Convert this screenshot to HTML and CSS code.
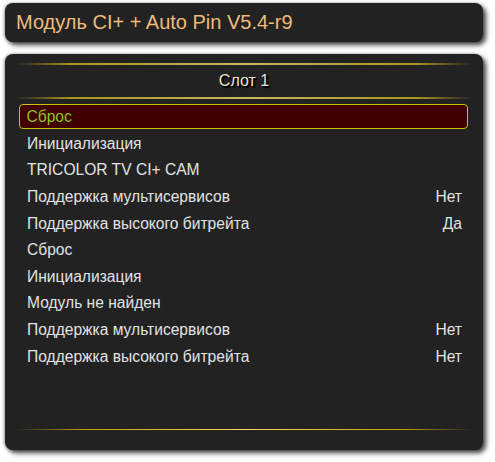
FILE: index.html
```html
<!DOCTYPE html>
<html lang="ru">
<head>
<meta charset="utf-8">
<title>Модуль CI+</title>
<link rel="stylesheet" href="styles.css">
</head>
<body>
<div class="screen">
  <header class="titlebar">Модуль CI+ + Auto Pin V5.4-r9</header>
  <section class="panel">
    <div class="gold-line"></div>
    <div class="slot-title">Слот 1</div>
    <div class="gold-line"></div>
    <ul class="menu">
      <li class="item selected"><span>Сброс</span></li>
      <li class="item"><span>Инициализация</span></li>
      <li class="item"><span>TRICOLOR TV CI+ CAM</span></li>
      <li class="item"><span>Поддержка мультисервисов</span><span class="val">Нет</span></li>
      <li class="item"><span>Поддержка высокого битрейта</span><span class="val">Да</span></li>
      <li class="item"><span>Сброс</span></li>
      <li class="item"><span>Инициализация</span></li>
      <li class="item"><span>Модуль не найден</span></li>
      <li class="item"><span>Поддержка мультисервисов</span><span class="val">Нет</span></li>
      <li class="item"><span>Поддержка высокого битрейта</span><span class="val">Нет</span></li>
    </ul>
    <div class="spacer"></div>
    <div class="gold-line bottom"></div>
  </section>
</div>
</body>
</html>
```

FILE: styles.css
```css
html, body {
  margin: 0;
  padding: 0;
  background: #ffffff;
}
body {
  width: 495px;
  height: 462px;
  overflow: hidden;
  font-family: "Liberation Sans", Arial, sans-serif;
}
.screen {
  display: flex;
  flex-direction: column;
  gap: 12px;
  padding: 3px 12px 0 5px;
}
.titlebar {
  height: 39px;
  box-sizing: border-box;
  background: #222222;
  border-radius: 8px;
  box-shadow: 3px 3px 5px rgba(0,0,0,0.75), -1px 0 3px rgba(0,0,0,0.35);
  color: #edbc7a;
  font-size: 20px;
  line-height: 39px;
  padding-left: 11px;
}
.panel {
  height: 396px;
  box-sizing: border-box;
  background: #222222;
  border-radius: 8px;
  box-shadow: 3px 3px 5px rgba(0,0,0,0.75), -1px 0 3px rgba(0,0,0,0.35);
  display: flex;
  flex-direction: column;
  padding: 9px 10px 0 10px;
}
.gold-line {
  height: 2px;
  background: linear-gradient(to right, rgba(150,130,20,0) 0%, #a89420 12%, #c8b860 50%, #a89420 88%, rgba(150,130,20,0) 100%);
}
.gold-line.bottom {
  height: 1px;
  background: linear-gradient(to right, rgba(180,160,0,0) 0%, #b8a400 15%, #f0e060 50%, #b8a400 85%, rgba(180,160,0,0) 100%);
  margin-bottom: 20px;
}
.slot-title {
  height: 32px;
  line-height: 32px;
  text-align: center;
  color: #ece4c4;
  font-size: 16px;
  text-shadow: 1px 1px 1px #000, 2px 2px 1px #000;
}
.menu {
  list-style: none;
  margin: 5px 0 0 0;
  padding: 0 5px 0 4px;
}
.item {
  height: 26.6px;
  box-sizing: border-box;
  display: flex;
  justify-content: space-between;
  align-items: center;
  padding: 0 6px 0 8px;
  color: #e2e2e2;
  font-size: 15.6px;
}
.item.selected {
  height: 25px;
  margin-bottom: 1.6px;
  background: #400000;
  border: 1.5px solid #c8c400;
  border-radius: 4px;
  color: #8cc41c;
  padding-left: 6.5px;
}
.spacer {
  flex: 1;
}
```
